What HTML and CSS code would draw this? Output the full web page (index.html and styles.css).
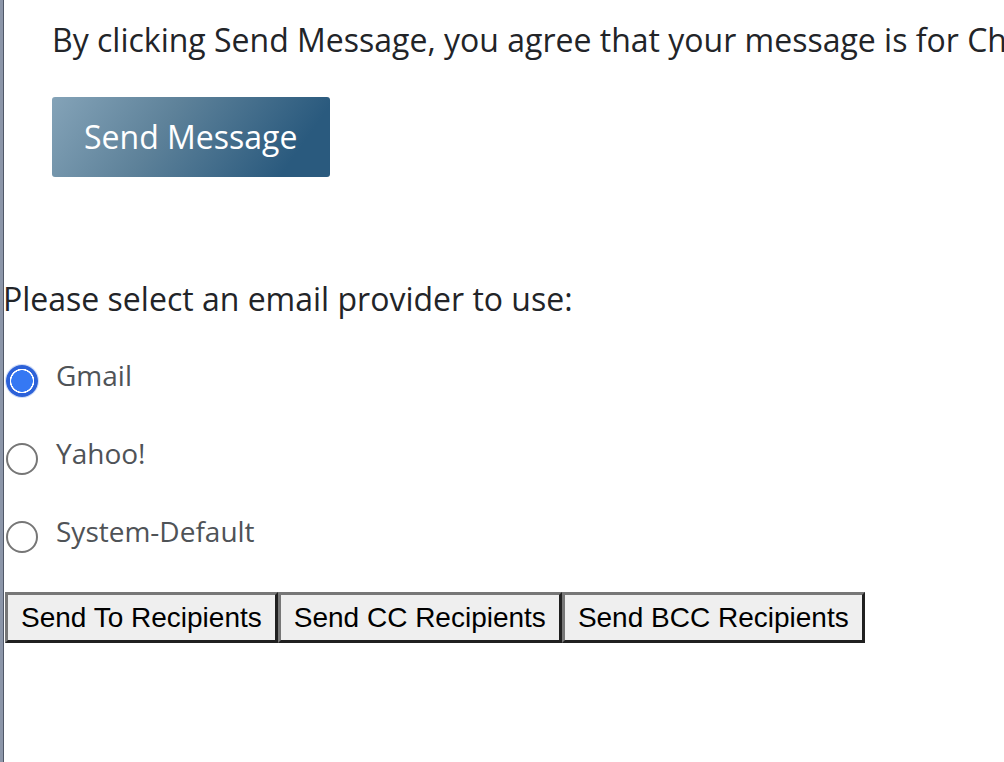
FILE: index.html
```html
<!DOCTYPE html>
<html lang="en">
<head>
<meta charset="utf-8">
<title>Send Message</title>
<link rel="stylesheet" href="styles.css">
</head>
<body>
<div class="page">
  <div class="intro">
    <p class="notice">By clicking Send Message, you agree that your message is for Church business only.</p>
    <button class="send-btn" type="button">Send Message</button>
  </div>
  <p class="prompt">Please select an email provider to use:</p>
  <div class="options">
    <label class="option"><input class="radio" type="radio" name="provider" checked><span class="opt-label">Gmail</span></label>
    <label class="option"><input class="radio" type="radio" name="provider"><span class="opt-label">Yahoo!</span></label>
    <label class="option"><input class="radio" type="radio" name="provider"><span class="opt-label">System-Default</span></label>
  </div>
  <div class="actions">
    <button class="act-btn" type="button">Send To Recipients</button>
    <button class="act-btn" type="button">Send CC Recipients</button>
    <button class="act-btn" type="button">Send BCC Recipients</button>
  </div>
</div>
</body>
</html>
```

FILE: styles.css
```css
html, body {
  margin: 0;
  padding: 0;
  background: #ffffff;
  overflow: hidden;
}

body {
  font-family: "Open Sans", "Noto Sans", sans-serif;
  color: #222428;
}

.page {
  min-height: 762px;
  border-left: 3px solid #8c96a9;
  box-shadow: inset 1px 0 0 #505868;
  box-sizing: border-box;
  overflow: hidden;
}

.intro {
  padding: 18px 0 0 49px;
}

.notice {
  margin: 0;
  font-size: 32px;
  line-height: 44px;
  white-space: nowrap;
}

.send-btn {
  margin-top: 35px;
  display: block;
  border: none;
  border-radius: 3px;
  padding: 18px 33px 18px 32px;
  font-family: "Open Sans", sans-serif;
  font-size: 32px;
  line-height: 44px;
  color: #ffffff;
  background: linear-gradient(125deg, #84a3b8 0%, #5d8199 40%, #2a5a7e 85%);
  cursor: pointer;
}

.prompt {
  margin: 100px 0 0 0;
  font-size: 32px;
  line-height: 44px;
  color: #222428;
}

.options {
  margin-top: 21px;
  display: flex;
  flex-direction: column;
}

.option {
  display: flex;
  align-items: flex-start;
  height: 78px;
  cursor: pointer;
}

.radio {
  appearance: none;
  -webkit-appearance: none;
  width: 32px;
  height: 32px;
  margin: 23px 0 0 3px;
  border-radius: 50%;
  border: 2px solid #767676;
  background: #ffffff;
  box-sizing: border-box;
  flex: none;
}

.radio:checked {
  border: none;
  background: radial-gradient(circle, #3578f3 0 10.5px, #ffffff 11px 12px, #2c61d8 12.5px 16px);
  box-shadow: 0 0 0 1px #cfdcf7;
}

.opt-label {
  margin: 14px 0 0 18px;
  font-size: 28px;
  line-height: 38px;
  color: #4f5357;
}

.actions {
  margin: 16px 0 0 2px;
  display: flex;
  gap: 0;
}

.act-btn {
  font-family: "Liberation Sans", Arial, sans-serif;
  font-size: 28px;
  line-height: 33px;
  padding: 6px 13px;
  color: #000000;
  background: #efefef;
  border-style: solid;
  border-width: 3px;
  border-color: #777777 #202020 #202020 #777777;
  border-radius: 0;
  cursor: pointer;
}
```
